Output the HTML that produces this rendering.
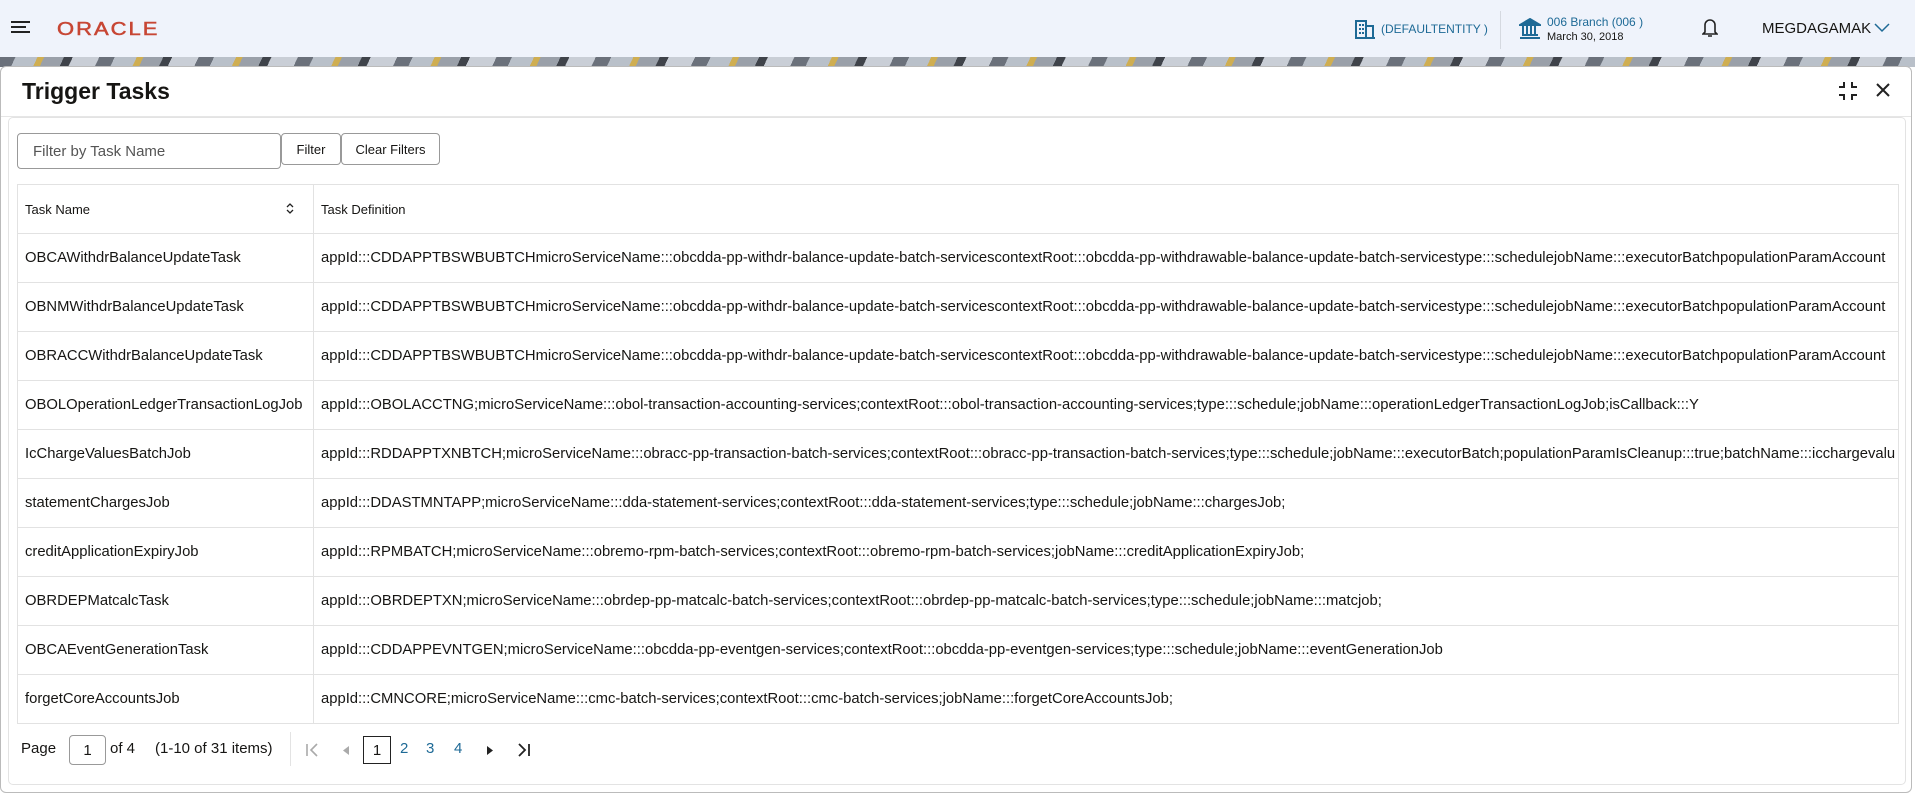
<!DOCTYPE html>
<html><head><meta charset="utf-8"><style>
*{box-sizing:border-box;margin:0;padding:0}
body{width:1915px;height:795px;overflow:hidden;background:#fff;font-family:"Liberation Sans",sans-serif;color:#161513;position:relative}
.hdr{position:absolute;left:0;top:0;width:1915px;height:57px;background:#eff3fb}
.stripe{position:absolute;left:0;top:57px;width:1915px;height:10px;background:repeating-linear-gradient(115deg,#6b717b 0 14px,#b9c0c9 14px 34px,#cfae52 34px 40px,#9aa0a9 40px 58px,#3f434a 58px 66px,#c9ced6 66px 90px)}
.panel{position:absolute;left:0;top:66px;width:1912px;height:727px;background:#fff;border:1px solid #bbb;border-radius:6px}
.title{position:absolute;left:22px;top:78px;font-size:23px;font-weight:bold}
.inner{position:absolute;left:8px;top:117px;width:1898px;height:668px;border:1px solid #e3e3e3;border-radius:5px;background:#fff}
.inp{position:absolute;left:17px;top:133px;width:264px;height:36px;border:1px solid #999;border-radius:4px;font-size:15px;color:#555;padding:9px 15px}
.btn{position:absolute;top:133px;height:32px;border:1px solid #999;border-radius:4px;font-size:13px;padding:8px 0;text-align:center;background:#fff}
table{position:absolute;left:17px;top:184px;width:1882px;border-collapse:collapse;table-layout:fixed}
td,th{border:1px solid #e2e2e2;height:49px;white-space:nowrap;overflow:hidden;font-size:14.8px;padding:0 7px;text-align:left;font-weight:normal}
th{font-size:13px}
.pg{position:absolute;top:740px;font-size:15px}
.blue{color:#1e6a96}
</style></head><body>
<div class="hdr">
<svg style="position:absolute;left:11px;top:20px" width="21" height="14"><path d="M0 2h19M0 7h15M0 12h19" stroke="#222" stroke-width="2"/></svg>
<div style="position:absolute;left:57px;top:16px;color:#c74634;font-size:22px;letter-spacing:2px;transform:scaleY(0.85);-webkit-text-stroke:0.6px #c74634">ORACLE</div>
<svg style="position:absolute;left:1355px;top:19px" width="20" height="20"><path d="M1 19V2h10v17M11 7h7v12M0 19h20" fill="none" stroke="#1e6a96" stroke-width="2"/><path d="M4 5h2v2H4zM7 5h2v2H7zM4 9h2v2H4zM7 9h2v2H7zM4 13h2v2H4zM7 13h2v2H7z" fill="#1e6a96"/></svg>
<div class="blue" style="position:absolute;left:1381px;top:22px;font-size:12px">(DEFAULTENTITY )</div>
<div style="position:absolute;left:1500px;top:11px;width:1px;height:38px;background:#d5d9e0"></div>
<svg style="position:absolute;left:1519px;top:18px" width="22" height="22"><path d="M1 7L11 1l10 6zM1 20h20M3 17h16M4 8v8M8 8v8M12 8v8M16 8v8" fill="#1e6a96" stroke="#1e6a96" stroke-width="2"/></svg>
<div class="blue" style="position:absolute;left:1547px;top:15px;font-size:12px">006 Branch (006 )</div>
<div style="position:absolute;left:1547px;top:31px;font-size:11px">March 30, 2018</div>
<svg style="position:absolute;left:1702px;top:17px" width="16" height="22"><path d="M3 15V8a5 5 0 0 1 10 0v7l2 2H1zM6 19h4" fill="none" stroke="#222" stroke-width="1.6"/></svg>
<div style="position:absolute;left:1762px;top:20px;font-size:15px">MEGDAGAMAK</div>
<svg style="position:absolute;left:1874px;top:23px" width="16" height="10"><path d="M1 1l7 7 7-7" fill="none" stroke="#1e6a96" stroke-width="1.5"/></svg>
</div>
<div class="stripe"></div>
<div class="panel"></div>
<div class="title">Trigger Tasks</div>
<svg style="position:absolute;left:1838px;top:81px" width="20" height="20"><path d="M6 1v5H1M14 1v5h5M6 19v-5H1M14 19v-5h5" fill="none" stroke="#222" stroke-width="2"/></svg>
<svg style="position:absolute;left:1876px;top:83px" width="14" height="14"><path d="M1 1l12 12M13 1L1 13" stroke="#222" stroke-width="2"/></svg>
<div style="position:absolute;left:1px;top:116px;width:1910px;height:1px;background:#e6e6e6"></div>
<div class="inner"></div>
<div class="inp">Filter by Task Name</div>
<div class="btn" style="left:281px;width:60px">Filter</div>
<div class="btn" style="left:341px;width:99px">Clear Filters</div>
<table>
<colgroup><col style="width:296px"><col></colgroup>
<tr><th>Task Name<svg style="float:right;margin-right:12px" width="8" height="12"><path d="M1 5l3-3 3 3M1 8l3 3 3-3" fill="none" stroke="#222" stroke-width="1.3"/></svg></th><th>Task Definition</th></tr>
<tr><td>OBCAWithdrBalanceUpdateTask</td><td>appId:::CDDAPPTBSWBUBTCHmicroServiceName:::obcdda-pp-withdr-balance-update-batch-servicescontextRoot:::obcdda-pp-withdrawable-balance-update-batch-servicestype:::schedulejobName:::executorBatchpopulationParamAccount</td></tr>
<tr><td>OBNMWithdrBalanceUpdateTask</td><td>appId:::CDDAPPTBSWBUBTCHmicroServiceName:::obcdda-pp-withdr-balance-update-batch-servicescontextRoot:::obcdda-pp-withdrawable-balance-update-batch-servicestype:::schedulejobName:::executorBatchpopulationParamAccount</td></tr>
<tr><td>OBRACCWithdrBalanceUpdateTask</td><td>appId:::CDDAPPTBSWBUBTCHmicroServiceName:::obcdda-pp-withdr-balance-update-batch-servicescontextRoot:::obcdda-pp-withdrawable-balance-update-batch-servicestype:::schedulejobName:::executorBatchpopulationParamAccount</td></tr>
<tr><td>OBOLOperationLedgerTransactionLogJob</td><td>appId:::OBOLACCTNG;microServiceName:::obol-transaction-accounting-services;contextRoot:::obol-transaction-accounting-services;type:::schedule;jobName:::operationLedgerTransactionLogJob;isCallback:::Y</td></tr>
<tr><td>IcChargeValuesBatchJob</td><td>appId:::RDDAPPTXNBTCH;microServiceName:::obracc-pp-transaction-batch-services;contextRoot:::obracc-pp-transaction-batch-services;type:::schedule;jobName:::executorBatch;populationParamIsCleanup:::true;batchName:::icchargevalu</td></tr>
<tr><td>statementChargesJob</td><td>appId:::DDASTMNTAPP;microServiceName:::dda-statement-services;contextRoot:::dda-statement-services;type:::schedule;jobName:::chargesJob;</td></tr>
<tr><td>creditApplicationExpiryJob</td><td>appId:::RPMBATCH;microServiceName:::obremo-rpm-batch-services;contextRoot:::obremo-rpm-batch-services;jobName:::creditApplicationExpiryJob;</td></tr>
<tr><td>OBRDEPMatcalcTask</td><td>appId:::OBRDEPTXN;microServiceName:::obrdep-pp-matcalc-batch-services;contextRoot:::obrdep-pp-matcalc-batch-services;type:::schedule;jobName:::matcjob;</td></tr>
<tr><td>OBCAEventGenerationTask</td><td>appId:::CDDAPPEVNTGEN;microServiceName:::obcdda-pp-eventgen-services;contextRoot:::obcdda-pp-eventgen-services;type:::schedule;jobName:::eventGenerationJob</td></tr>
<tr><td>forgetCoreAccountsJob</td><td>appId:::CMNCORE;microServiceName:::cmc-batch-services;contextRoot:::cmc-batch-services;jobName:::forgetCoreAccountsJob;</td></tr>
</table>
<div class="pg" style="left:21px">Page</div>
<div style="position:absolute;left:69px;top:735px;width:37px;height:30px;border:1px solid #999;border-radius:4px;text-align:center;font-size:15px;padding-top:6px">1</div>
<div class="pg" style="left:110px">of 4</div>
<div class="pg" style="left:155px">(1-10 of 31 items)</div>
<div style="position:absolute;left:290px;top:732px;width:1px;height:34px;background:#e3e3e3"></div>
<svg style="position:absolute;left:305px;top:743px" width="14" height="14"><path d="M2 1v12M12 1L6 7l6 6" fill="none" stroke="#aaa" stroke-width="1.6"/></svg>
<svg style="position:absolute;left:343px;top:746px" width="6" height="9"><path d="M6 0v9L0 4.5z" fill="#aaa"/></svg>
<div style="position:absolute;left:363px;top:736px;width:28px;height:28px;border:1px solid #222;text-align:center;font-size:15px;padding-top:5px">1</div>
<div class="pg blue" style="left:400px">2</div>
<div class="pg blue" style="left:426px">3</div>
<div class="pg blue" style="left:454px">4</div>
<svg style="position:absolute;left:487px;top:746px" width="6" height="9"><path d="M0 0v9l6-4.5z" fill="#222"/></svg>
<svg style="position:absolute;left:517px;top:743px" width="14" height="14"><path d="M2 1l6 6-6 6M12 1v12" fill="none" stroke="#222" stroke-width="1.8"/></svg>
</body></html>
